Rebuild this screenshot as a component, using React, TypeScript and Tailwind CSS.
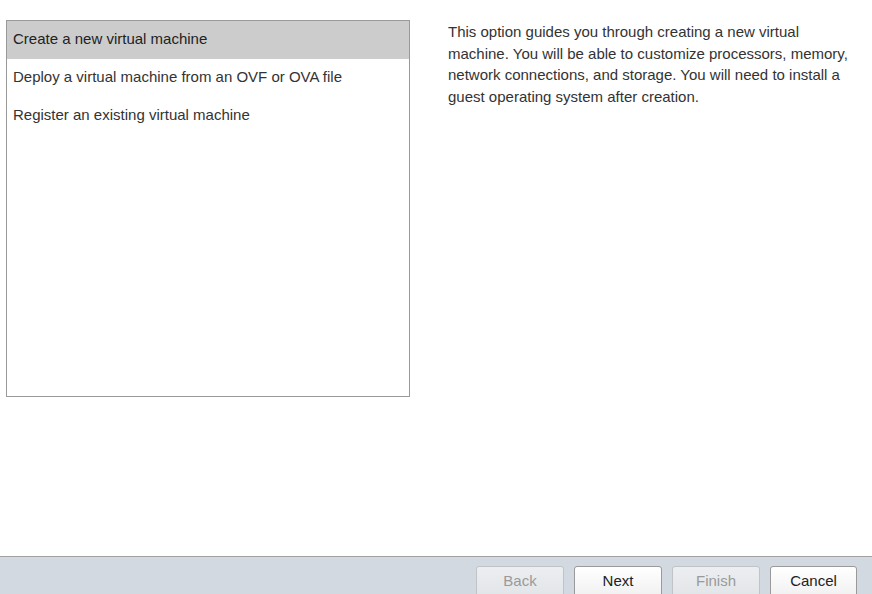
export default function App() {
  const items = [
    "Create a new virtual machine",
    "Deploy a virtual machine from an OVF or OVA file",
    "Register an existing virtual machine",
  ];
  const buttons = [
    { t: "Back", d: true, w: "w-[88px]", m: "" },
    { t: "Next", d: false, w: "w-[88px]", m: "ml-[10px]" },
    { t: "Finish", d: true, w: "w-[88px]", m: "ml-[10px]" },
    { t: "Cancel", d: false, w: "w-[87px]", m: "ml-[10px]" },
  ];
  return (
    <div
      className="w-[872px] h-[594px] bg-white flex flex-col overflow-hidden text-[#333]"
      style={{ fontFamily: '"Liberation Sans", Arial, sans-serif' }}
    >
      <div className="flex-1 flex pt-5 pl-[6px]">
        <div className="w-[404px] h-[377px] border border-[#999] bg-white">
          {items.map((t, i) => (
            <div
              key={t}
              className={`h-[38px] flex items-center pl-[6px] pb-[2px] text-[15px] ${
                i === 0 ? "bg-[#cccccc] text-[#222]" : ""
              }`}
            >
              {t}
            </div>
          ))}
        </div>
        <div className="ml-[38px] w-[404px] pt-[1px] text-[15px] leading-[21.7px]">
          This option guides you through creating a new virtual machine. You will be able to
          customize processors, memory, network connections, and storage. You will need to
          install a guest operating system after creation.
        </div>
      </div>
      <div className="h-[38px] border-t border-[#a0a0a0] bg-[#d3d9e0] flex justify-end items-start pt-[9px] pr-[15px]">
        {buttons.map((b) => (
          <div
            key={b.t}
            className={`${b.w} ${b.m} h-[32px] shrink-0 rounded-[3px] border flex items-center justify-center text-[15px] pb-[2px] ${
              b.d
                ? "border-[#c0c4c8] bg-gradient-to-b from-[#eceef0] to-[#e2e5e8] text-[#9a9a9a]"
                : "border-[#9a9a9a] bg-gradient-to-b from-white to-[#f0f0f0] text-[#222]"
            }`}
          >
            {b.t}
          </div>
        ))}
      </div>
    </div>
  );
}
